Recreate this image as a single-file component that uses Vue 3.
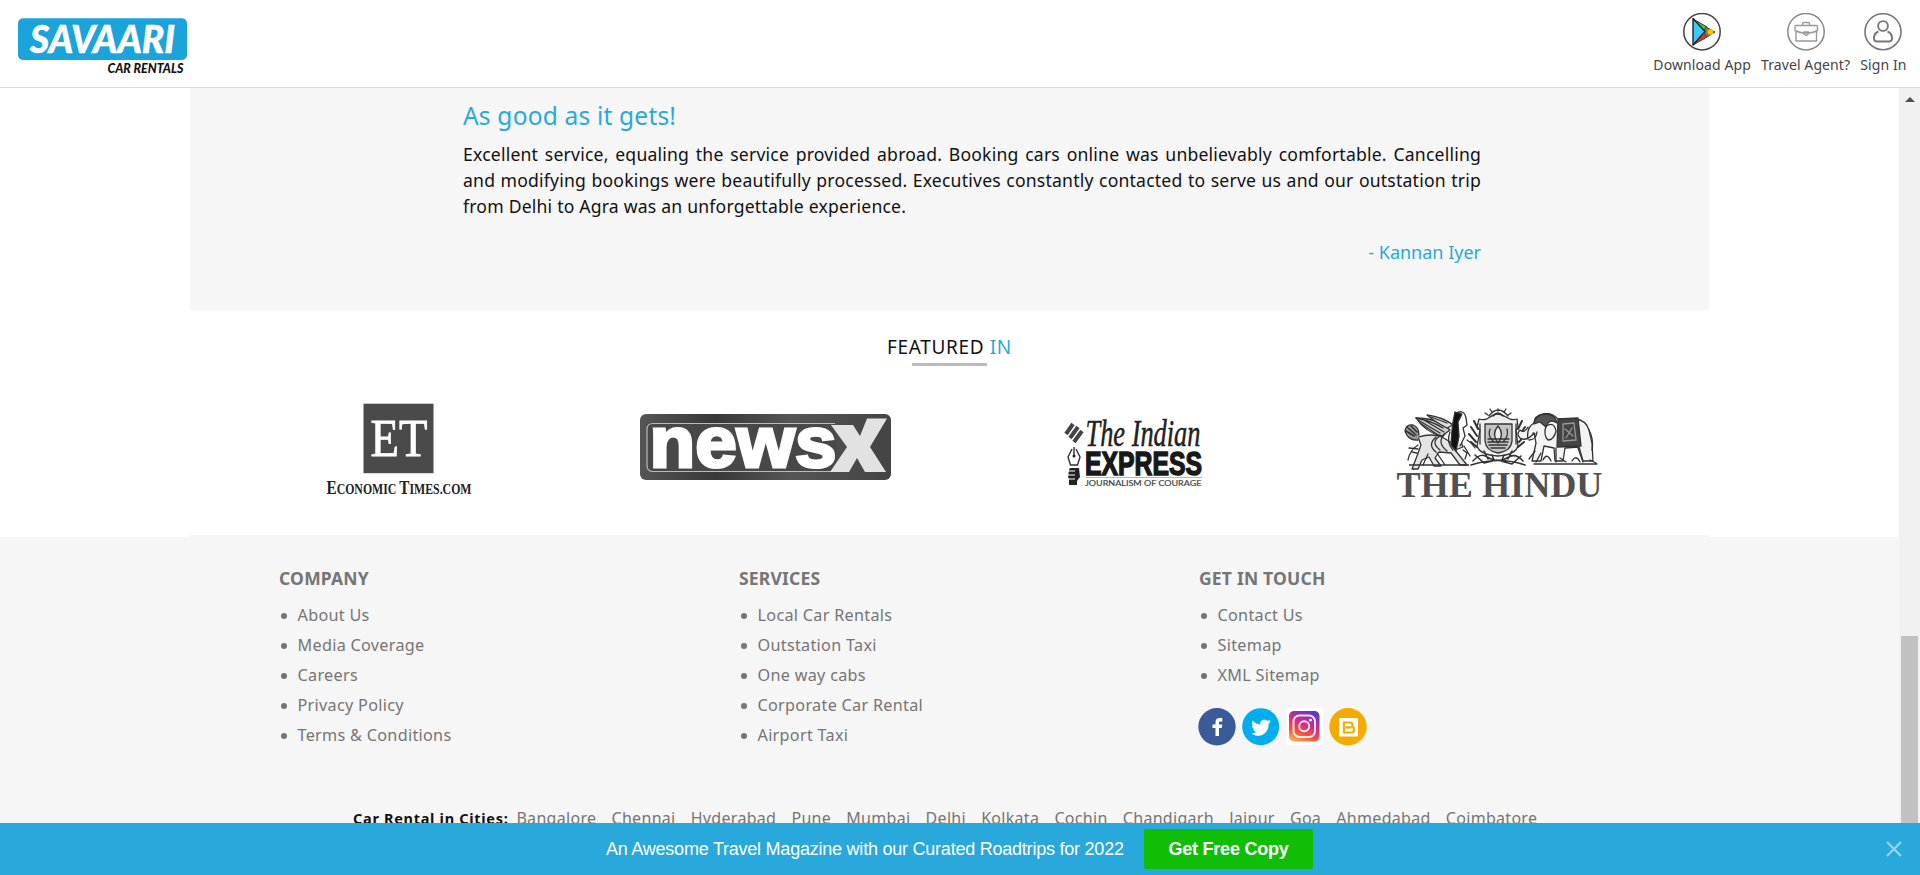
<script setup>
const company = ['About Us', 'Media Coverage', 'Careers', 'Privacy Policy', 'Terms & Conditions']
const services = ['Local Car Rentals', 'Outstation Taxi', 'One way cabs', 'Corporate Car Rental', 'Airport Taxi']
const contact = ['Contact Us', 'Sitemap', 'XML Sitemap']
const cities = ['Bangalore', 'Chennai', 'Hyderabad', 'Pune', 'Mumbai', 'Delhi', 'Kolkata', 'Cochin', 'Chandigarh', 'Jaipur', 'Goa', 'Ahmedabad', 'Coimbatore']
</script>

<template>
  <div class="page">
    <header class="header">
      <svg class="brand" width="180" height="80" viewBox="10 4 180 80">
        <rect x="18" y="18.3" width="169" height="41.7" rx="5" fill="#1ba3db" />
        <text x="30" y="52.8" class="brand-name" textLength="145" lengthAdjust="spacingAndGlyphs">SAVAARI</text>
        <text x="107.5" y="72.5" class="brand-sub" textLength="76" lengthAdjust="spacingAndGlyphs">CAR RENTALS</text>
      </svg>
      <nav class="nav">
        <a class="nav-item">
          <svg width="38" height="38" viewBox="0 0 38 38">
            <circle cx="19" cy="18.700" r="18.2" fill="#fff" stroke="#444" stroke-width="1.5" />
            <path d="M10 6 24 14 20 19Z" fill="#32d04c" stroke="#333" />
            <path d="M10 32 24 24 20 18Z" fill="#e8343d" stroke="#333" />
            <path d="M23 14 32 19 24 24 20 19Z" fill="#8d7a30" stroke="#444" />
            <path d="M10 5.5 22 18.5 10 32Z" fill="#3cc8fb" stroke="#222" stroke-width="1.4" stroke-linejoin="round" />
            <circle cx="27.5" cy="19" r="2.800" fill="#ffc20a" />
          </svg>
          <span>Download App</span>
        </a>
        <a class="nav-item">
          <svg width="38" height="38" viewBox="0 0 38 38" fill="none" stroke="#999" stroke-width="1.4">
            <circle cx="19" cy="18.700" r="18.2" stroke="#888" stroke-width="1.500" />
            <path d="M15.500 12.500v-2q0-1 1-1h5q1 0 1 1v2M9 12.500h20.500q1 0 1 1v4q-5 2.500-9.500 2.500h-4q-4 0-9-2.500v-4q0-1 1-1ZM9 18.500v9.500h20.500v-9.500M17 19h4.500v2l-2.200 1.500-2.300-1.500Z" />
          </svg>
          <span>Travel Agent?</span>
        </a>
        <a class="nav-item">
          <svg width="38" height="38" viewBox="0 0 38 38" fill="none" stroke="#777" stroke-width="1.9">
            <circle cx="19" cy="18.700" r="18" stroke-width="1.6" />
            <circle cx="19" cy="13" r="4.900" />
            <path d="M14.500 18.500q-4.500 1.500-4.500 7 0 3 3 3h12q3 0 3-3 0-5.500-4.500-7" />
          </svg>
          <span>Sign In</span>
        </a>
      </nav>
    </header>

    <div class="body">
      <main class="content">
        <section class="testimonial">
          <div class="quote">
            <h2>As good as it gets!</h2>
            <p>Excellent service, equaling the service provided abroad. Booking cars online was unbelievably comfortable. Cancelling and modifying bookings were beautifully processed. Executives constantly contacted to serve us and our outstation trip from Delhi to Agra was an unforgettable experience.</p>
            <div class="author">- Kannan Iyer</div>
          </div>
        </section>

        <section class="featured">
          <h3>FEATURED <span>IN</span></h3>
          <div class="rule"></div>
          <div class="logos">
            <svg width="240" height="120" viewBox="279 390 240 120">
              <rect x="363.500" y="403.700" width="70" height="69.500" fill="#4a4a4a" />
              <text x="370.500" y="455.700" class="serif" font-size="53" fill="#fff" stroke="#fff" stroke-width=".8" textLength="57" lengthAdjust="spacingAndGlyphs">ET</text>
              <text x="326.500" y="493.700" class="serif bold" font-size="18" fill="#222" textLength="145" lengthAdjust="spacingAndGlyphs">E<tspan font-size="14">CONOMIC </tspan>T<tspan font-size="14">IMES.COM</tspan></text>
            </svg>
            <svg width="280" height="120" viewBox="626 390 280 120">
              <defs>
                <linearGradient id="plate" x1="0" x2="1" y1="0" y2="0">
                  <stop offset="0" stop-color="#555" /><stop offset=".3" stop-color="#383838" /><stop offset=".6" stop-color="#555" /><stop offset="1" stop-color="#444" />
                </linearGradient>
              </defs>
              <rect x="640" y="414" width="251" height="66" rx="6" fill="url(#plate)" />
              <path d="M835 423.500H653q-6 0-6 6v36q0 6 6 6h184" fill="#484848" stroke="#bbb" stroke-width="1.200" />
              <text x="649.500" y="466.500" class="sans bold" font-size="72" fill="#fff" stroke="#fff" stroke-width="3" textLength="187" lengthAdjust="spacingAndGlyphs">news</text>
              <path d="M831 425h22l7 11 7-17.500h20l-17 28.500 16 25h-21l-8-14-8 14h-19l17-25Z" fill="#e2e2e2" />
            </svg>
            <svg width="240" height="120" viewBox="1013 390 240 120">
              <g stroke="#444" stroke-width="4">
                <path d="M1066 434l7-10M1070 438l8-11M1074 442l8-11" />
              </g>
              <path d="M1072 449l-4 8 2.500 8h7l2.500-8-4-8M1074 447v10" fill="none" stroke="#333" stroke-width="1.400" />
              <circle cx="1074" cy="456" r="1.500" fill="#222" />
              <path d="M1069 470q0-2 2-2h8l1 9-3 4v4h-8v-6l-1-2Z" fill="#222" />
              <path d="M1068 471h7M1068 475h7M1068 479h7" stroke="#fff" />
              <text x="1085.500" y="446" class="serif italic" font-size="37" fill="#222" stroke="#222" stroke-width=".5" textLength="115" lengthAdjust="spacingAndGlyphs">The Indian</text>
              <text x="1085" y="474.700" class="sans bold" font-size="33.500" fill="#181818" stroke="#181818" stroke-width="1.500" textLength="117" lengthAdjust="spacingAndGlyphs">EXPRESS</text>
              <path d="M1086 477.500h116" stroke="#999" stroke-width=".7" />
              <text x="1085" y="486" class="lato" font-size="8" fill="#444" stroke="#444" stroke-width=".2" textLength="116.500" lengthAdjust="spacingAndGlyphs">JOURNALISM OF COURAGE</text>
            </svg>
            <svg width="240" height="120" viewBox="1380 390 240 120">
              <g fill="none" stroke="#333" stroke-width="1.300" stroke-linejoin="round" stroke-linecap="round">
                <!-- winged cow -->
                <path d="M1418 437q14-4 24 0l10 6 8-4 3 8-8 3 8 10 4 5h-7l-9-12-12-1-4 6 6 8h-7l-5-9-7 3-4 9h-6l5-13 4-11Z" fill="#e4e4e4" />
                <path d="M1418 440q-10 1-13-9 1-7 8-6 6 2 6 10" fill="#999" />
                <path d="M1407 427l9 8M1406 431l8 5M1411 426l6 6" stroke-width="1.600" />
                <path d="M1416 418q10 15 26 18l8-6q-12-12-34-12Z" fill="#ccc" />
                <path d="M1427 415q8 7 20 13l6-3q-10-8-26-10Z" fill="#ddd" />
                <path d="M1416 418q16 3 27 10M1420 423l18 12M1431 417l16 6M1424 420l20 12M1418 420l22 13" />
                <path d="M1440 436q-10 6 0 14M1445 434q-9 8 2 17M1450 432q-4 10 3 18M1436 437q-9 8 0 15" />
                <path d="M1418 445q-8 5-10 15M1428 454l-5 11M1437 453l8 12M1409 448l9 1M1412 452l5 1" />
                <path d="M1455 414q9-6 11 4l1 7-4 3 2 8-5 10" fill="#fff" />
                <path d="M1455 412l7 2-4 8 1 14-3 15-5-6 1-15 1-8Z" fill="#111" />
                <path d="M1463 450l4 3-2 6M1467 440q5 3 8 8M1464 446l6 10" />
                <!-- crest -->
                <path d="M1479 419q6 2 11-2 7-6 16 0 6 4 11 2l1 8-2 3 2 16q-3 9-20 10-18-1-21-10l3-16-3-3Z" fill="#eee" />
                <path d="M1485 424h27v17q-1 10-14 12-12-2-13-12Z" fill="#c4c4c4" />
                <path d="M1498 426q-7 8 0 17 7-9 0-17" fill="#eee" />
                <path d="M1490 429q-3 7 4 13M1507 429q2 7-4 13M1488 439h21M1488 442h20M1489 445h18M1491 448h14M1480 424v20M1516 424v20" />
                <path d="M1489 416q9-12 19 0M1485 413l3 2M1490 409l2 3M1498 409v2M1506 409l-2 3M1511 413l-3 2M1493 416q5-6 10 0" />
                <path d="M1474 421l4 8M1471 427l6 9M1469 434l7 8M1471 442l6 5M1522 421l-4 8M1525 427l-6 9M1526 434l-7 8M1524 442l-6 5" stroke-width="2" />
                <path d="M1473 461q8-9 14-4 11 7 22 0 7-4 14 4M1475 455l9 8 13-3 15 4 9-8M1471 465q28-9 54 0M1484 451l4 8M1512 451l-4 8M1492 455l2 5M1504 455l-2 5" stroke-width="1.600" />
                <!-- elephant -->
                <path d="M1528 439q-2-11 6-16 0-7 9-9 9-2 15 5h17q11 1 14 11l3 13 1 18h-10l-4-14-14 1-2 13h-8l-1-13-10-2-3 15h-9l4-18-2-10q-7 9-14 5-4-4 0-8 4 4 8-3" fill="#f3f3f3" />
                <path d="M1534 424q1-10 14-10 7 1 9 9-8-5-11 4l-6-5Z" fill="#555" />
                <path d="M1546 426q8-5 10 5-2 9-8 9-5-5-2-14M1533 433l2 1M1529 440q7 0 8-8M1589 430q5 9 3 20M1556 448v14M1578 448l5 14" />
                <path d="M1558 419l20-1 3 28-24 1Z" fill="#444" />
                <path d="M1563 424l11-1 2 17-13 1ZM1565 429l8 7M1572 428l-6 10" stroke="#999" />
                <path d="M1534 464h63M1543 460q4-8 8 1M1572 461q4-7 8 1M1590 460l6 3M1529 459l6-8M1536 462l5-9M1560 458l6 4" />
              </g>
              <path d="M1409 465h60" stroke="#333" stroke-width="1.500" />
              <text x="1396.500" y="496.700" class="serif bold" font-size="36.500" fill="#505050" textLength="206" lengthAdjust="spacingAndGlyphs">THE HINDU</text>
            </svg>
          </div>
        </section>

        <footer class="footer">
          <div class="columns">
            <div class="col">
              <h4>COMPANY</h4>
              <ul><li v-for="i in company" :key="i">{{ i }}</li></ul>
            </div>
            <div class="col">
              <h4>SERVICES</h4>
              <ul><li v-for="i in services" :key="i">{{ i }}</li></ul>
            </div>
            <div class="col">
              <h4>GET IN TOUCH</h4>
              <ul><li v-for="i in contact" :key="i">{{ i }}</li></ul>
              <div class="social">
                <svg width="38" height="38" viewBox="0 0 38 38">
                  <circle cx="19" cy="18.700" r="18.700" fill="#3b5a9a" />
                  <path d="M17.500 28v-8h-3v-3.500h3v-2.200q0-4.300 4.300-4.300h2.500v3.500h-2q-1.300 0-1.300 1.300v1.700h3.300l-.5 3.500h-2.800v8Z" fill="#fff" />
                </svg>
                <svg width="38" height="38" viewBox="0 0 38 38">
                  <circle cx="18.700" cy="18.700" r="18.500" fill="#00adee" />
                  <path d="M10 25.500q3 .2 5-1.400-2.500-.3-3.400-2.500h1.500q-2.700-1-2.800-3.800l1.500.4q-2.500-2-1-5.200 3 3.600 7.700 4-.6-5 4-5 1.700 0 2.800 1.200l2.400-.9-1.500 2.100 2.100-.5-1.900 1.900q0 8-6.400 11Q14.500 29 10 25.500Z" fill="#fff" stroke="#fff" stroke-width=".6" />
                </svg>
                <svg width="38" height="38" viewBox="0 0 38 38">
                  <defs>
                    <linearGradient id="insta" x1=".15" x2=".6" y1="1" y2="0">
                      <stop offset="0" stop-color="#ffb34c" /><stop offset=".3" stop-color="#f6563e" /><stop offset=".6" stop-color="#d82c84" /><stop offset="1" stop-color="#6439c9" />
                    </linearGradient>
                  </defs>
                  <path d="M0 0h37v37H0Z" fill="#fff" />
                  <rect x="3" y="3" width="30.500" height="30.500" rx="5" fill="url(#insta)" />
                  <g fill="none" stroke="#fff" stroke-opacity=".9" stroke-width="1.900"><rect x="7.500" y="7.500" width="21.500" height="21.500" rx="6" /><circle cx="18.200" cy="18.200" r="5" /></g>
                  <circle cx="24.500" cy="12.200" r="1.400" fill="#fff" />
                </svg>
                <svg width="38" height="38" viewBox="0 0 38 38">
                  <circle cx="19" cy="18.700" r="18.700" fill="#f4ab00" />
                  <rect x="10" y="10" width="19" height="18.500" rx="1" fill="#fff" />
                  <path d="M15 14.500h6q2.500 0 2.500 2.500v1.500q1.500.5 1.500 2.500v1q0 2.500-2.500 2.500h-7.500Zm1.500 4.800h6M15 14.500V24.500" fill="none" stroke="#f4ab00" stroke-width="2.200" />
                </svg>
              </div>
            </div>
          </div>
          <div class="cities">
            <b>Car Rental in Cities:</b>
            <a v-for="c in cities" :key="c">{{ c }}</a>
          </div>
        </footer>
      </main>
      <div class="scrollbar">
        <div class="arrow"></div>
        <div class="thumb"></div>
      </div>
    </div>

    <div class="banner">
      <span class="msg">An Awesome Travel Magazine with our Curated Roadtrips for 2022</span>
      <button>Get Free Copy</button>
      <svg class="close" width="16" height="16" viewBox="0 0 16 16"><path d="M1 1l14 14M15 1L1 15" stroke="#94d4ed" stroke-width="2.300" /></svg>
    </div>
  </div>
</template>

<style>
body { background: #fff; overflow: hidden; }
</style>

<style scoped>
.page { width: 1920px; height: 875px; display: flex; flex-direction: column; overflow: hidden; font-family: "Noto Sans", "Open Sans", sans-serif; color: #111; }
h2, h3, h4, p, ul { margin: 0; padding: 0; }
.header { flex: none; height: 87px; border-bottom: 1px solid #d9d9d9; display: flex; justify-content: space-between; background: #fff; }
.brand { margin: 4px 0 0 10px; }
.brand-name { font: italic 900 38px Lato, sans-serif; fill: #fff; stroke: #fff; stroke-width: 0.5px; }
.brand-sub { font: italic 900 12.5px Lato, sans-serif; fill: #111; }
.nav { display: flex; gap: 10px; padding: 13px 13.5px 0 0; }
.nav-item { display: flex; flex-direction: column; align-items: center; font-size: 14px; line-height: 20px; color: #444; white-space: nowrap; }
.nav-item span { margin-top: 4px; letter-spacing: 0.1px; }
.body { flex: none; height: 735px; display: flex; overflow: hidden; }
.content { width: 1899px; display: flex; flex-direction: column; }
.testimonial { flex: none; box-sizing: border-box; height: 222px; margin: 0 190px; background: #f6f6f6; padding: 11px 228px 0 273px; }
.quote h2 { font-size: 24.5px; font-weight: 400; line-height: 34px; color: #29a9db; letter-spacing: 0.2px; }
.quote p { margin-top: 7.5px; font-size: 17.6px; line-height: 26.3px; text-align: justify; letter-spacing: 0.2px; }
.author { margin-top: 20px; text-align: right; font-size: 18px; line-height: 26px; color: #29a9db; }
.featured { flex: none; box-sizing: border-box; height: 227px; padding-top: 24px; display: flex; flex-direction: column; align-items: center; }
.featured h3 { font-weight: 400; font-size: 19px; line-height: 26px; letter-spacing: 0.65px; }
.featured h3 span { color: #29a9db; }
.rule { width: 75px; height: 3px; background: #bbb; margin-top: 3px; }
.logos { display: grid; grid-template-columns: repeat(4, 367px); justify-items: center; margin-top: 24px; }
.serif { font-family: "Liberation Serif", serif; }
.sans { font-family: "Liberation Sans", sans-serif; }
.lato { font-family: Lato, sans-serif; }
.bold { font-weight: 700; }
.italic { font-style: italic; }
.footer { flex: none; background: #f6f6f6; color: #757575; display: flex; flex-direction: column; }
.footer::before { content: ""; flex: none; height: 2px; width: 1519px; margin: -2px auto 0; background: #f6f6f6; }
.columns { display: grid; grid-template-columns: repeat(3, 460px); padding: 28px 0 0 279px; height: 210px; }
.col h4 { font-size: 17.5px; line-height: 26px; font-weight: 700; margin-bottom: 8.5px; letter-spacing: 0.2px; }
.col ul { list-style: none; }
.col li { display: flex; align-items: center; font-size: 16.2px; line-height: 30px; letter-spacing: 0.3px; white-space: nowrap; }
.col li::before { content: ""; width: 6px; height: 6px; border-radius: 50%; background: #757575; margin: 2px 10.5px 0 2px; }
.social { display: flex; gap: 5.8px; margin: 18.5px 0 0 -1px; }
.cities { display: flex; align-items: baseline; height: 26px; margin: 30px 0 0 353px; font-size: 16px; line-height: 26px; white-space: nowrap; letter-spacing: 0.3px; }
.cities b { font-size: 14.5px; color: #111; margin-right: 8px; letter-spacing: 0.7px; }
.cities a { margin-right: 15.2px; }
.scrollbar { width: 21px; background: #f1f1f1; display: flex; flex-direction: column; align-items: center; justify-content: space-between; }
.arrow { border: 5px solid transparent; border-top: 0; border-bottom: 5px solid #505050; margin-top: 9px; }
.thumb { width: 17px; height: 187px; background: #c1c1c1; }
.banner { flex: none; height: 52px; background: #29a8db; display: flex; align-items: center; font-family: "Liberation Sans", Arial, sans-serif; }
.msg { margin-left: 606px; width: 538px; font-size: 18px; color: #fff; white-space: nowrap; letter-spacing: -0.23px; }
.banner button { width: 169px; height: 40px; border: 0; border-radius: 2px; background: #0fbe05; color: #fff; font: bold 18px "Liberation Sans", sans-serif; letter-spacing: -0.25px; padding: 0; }
.close { margin-left: auto; margin-right: 18px; }
</style>
